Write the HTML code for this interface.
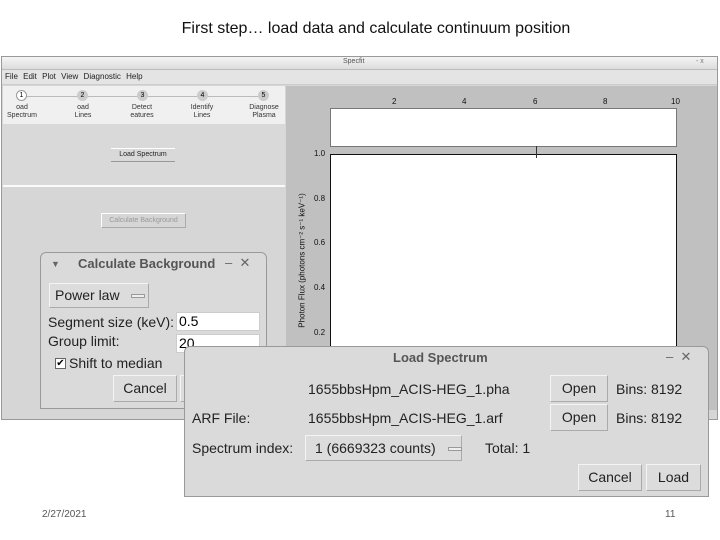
<!DOCTYPE html>
<html><head><meta charset="utf-8"><style>
*{margin:0;padding:0;box-sizing:border-box}
body{width:720px;height:540px;background:#fff;position:relative;overflow:hidden;font-family:"Liberation Sans",sans-serif;}
.a{position:absolute;white-space:nowrap}
.btn{position:absolute;background:#dcdcdc;border:1px solid #aaa;border-top-color:#f4f4f4;border-left-color:#f4f4f4;font-size:14px;color:#222;text-align:center;white-space:nowrap}
.t{position:absolute;font-size:14px;color:#222;white-space:nowrap}
.s{position:absolute;font-size:7px;color:#333;text-align:center;line-height:8px;white-space:nowrap}
.n{position:absolute;font-size:8px;color:#111;font-family:"Liberation Sans",sans-serif}
</style></head><body>
<div class="a" style="left:0;top:20px;width:752px;text-align:center;font-family:'Liberation Sans',sans-serif;font-size:16px;color:#111">First step… load data and calculate continuum position</div>

<!-- main window -->
<div class="a" style="left:1px;top:56px;width:717px;height:364px;background:#d6d6d6;border:1px solid #999"></div>
<div class="a" style="left:2px;top:57px;width:715px;height:13px;background:linear-gradient(#f4f4f4,#dcdcdc);border-bottom:1px solid #bbb"></div>
<div class="a" style="left:343px;top:58px;font-size:7px;color:#555">Specfit</div>
<div class="a" style="left:696px;top:58px;font-size:7px;color:#777">- x</div>
<div class="a" style="left:2px;top:70px;width:715px;height:15px;background:#e4e4e4;border-bottom:1px solid #ccc"></div>
<div class="a" style="left:5px;top:72px;font-size:8px;color:#222;word-spacing:3px">File Edit Plot View Diagnostic Help</div>
<!-- steps -->
<div class="a" style="left:3px;top:86px;width:282px;height:38px;background:#f0f0f0"></div>
<div class="a" style="left:22px;top:96px;width:242px;height:1px;background:#bbb"></div>
<div class="a" style="left:16px;top:90px;width:11px;height:11px;border-radius:50%;background:#fff;border:1px solid #999;font-size:7px;text-align:center;line-height:9px">1</div>
<div class="a" style="left:77px;top:90px;width:11px;height:11px;border-radius:50%;background:#ccc;font-size:7px;text-align:center;line-height:11px">2</div>
<div class="a" style="left:137px;top:90px;width:11px;height:11px;border-radius:50%;background:#ccc;font-size:7px;text-align:center;line-height:11px">3</div>
<div class="a" style="left:197px;top:90px;width:11px;height:11px;border-radius:50%;background:#ccc;font-size:7px;text-align:center;line-height:11px">4</div>
<div class="a" style="left:258px;top:90px;width:11px;height:11px;border-radius:50%;background:#ccc;font-size:7px;text-align:center;line-height:11px">5</div>
<div class="s" style="left:2px;top:104px;width:40px">oad<br>Spectrum</div>
<div class="s" style="left:63px;top:104px;width:40px">oad<br>Lines</div>
<div class="s" style="left:122px;top:104px;width:40px">Detect<br>eatures</div>
<div class="s" style="left:182px;top:104px;width:40px">Identify<br>Lines</div>
<div class="s" style="left:244px;top:104px;width:40px">Diagnose<br>Plasma</div>
<div class="a" style="left:3px;top:124px;width:282px;height:63px;background:#d9d9d9;border-bottom:2px solid #fafafa"></div>
<div class="a" style="left:111px;top:148px;width:64px;height:14px;border-top:1px solid #fff;border-bottom:1px solid #999;font-size:7px;text-align:center;line-height:12px;color:#222">Load Spectrum</div>
<div class="a" style="left:3px;top:189px;width:282px;height:221px;background:#d6d6d6"></div>
<div class="a" style="left:101px;top:213px;width:85px;height:15px;border:1px solid #aaa;border-top-color:#fff;border-left-color:#fff;font-size:7px;text-align:center;line-height:13px;color:#999">Calculate Background</div>
<!-- plot -->
<div class="a" style="left:286px;top:86px;width:431px;height:324px;background:#c0c0c0"></div>
<div class="n" style="left:392px;top:97px">2</div><div class="n" style="left:462px;top:97px">4</div><div class="n" style="left:533px;top:97px">6</div><div class="n" style="left:603px;top:97px">8</div><div class="n" style="left:671px;top:97px">10</div>
<div class="a" style="left:330px;top:108px;width:347px;height:39px;background:#fff;border:1px solid #777"></div>
<div class="a" style="left:330px;top:154px;width:347px;height:200px;background:#fff;border:1px solid #111"></div>
<div class="a" style="left:536px;top:146px;width:1px;height:12px;background:#333"></div>
<div class="n" style="left:314px;top:149px">1.0</div><div class="n" style="left:314px;top:194px">0.8</div><div class="n" style="left:314px;top:238px">0.6</div><div class="n" style="left:314px;top:283px">0.4</div><div class="n" style="left:314px;top:328px">0.2</div>
<div class="a" style="left:212px;top:256px;width:180px;transform:rotate(-90deg);font-size:8px;color:#111;text-align:center">Photon Flux (photons cm⁻² s⁻¹ keV⁻¹)</div>

<!-- calc background dialog -->
<div class="a" style="left:40px;top:252px;width:227px;height:157px;background:#dadada;border:1px solid #999;border-radius:6px 6px 0 0"></div>
<div class="a" style="left:51px;top:259px;font-size:9px;color:#666">▼</div>
<div class="a" style="left:78px;top:256px;font-size:13px;font-weight:bold;color:#555">Calculate Background</div>
<div class="a" style="left:225px;top:255px;font-size:13px;color:#666">–&nbsp;&nbsp;✕</div>
<div class="btn" style="left:49px;top:283px;width:100px;height:25px;line-height:23px;text-align:left;padding-left:5px">Power law <span style="display:inline-block;width:14px;height:4px;background:#eee;border:1px solid #999;vertical-align:middle;margin-left:8px"></span></div>
<div class="t" style="left:48px;top:314px">Segment size (keV):</div>
<div class="a" style="left:176px;top:312px;width:84px;height:19px;background:#fff;border:1px solid #ccc;font-size:14px;padding-left:2px;line-height:17px">0.5</div>
<div class="t" style="left:48px;top:333px">Group limit:</div>
<div class="a" style="left:176px;top:334px;width:84px;height:19px;background:#fff;border:1px solid #ccc;font-size:14px;padding-left:2px;line-height:17px">20</div>
<div class="a" style="left:55px;top:358px;width:11px;height:11px;background:#fff;border:1px solid #666;font-size:10px;line-height:9px;text-align:center">✔</div>
<div class="t" style="left:69px;top:355px">Shift to median</div>
<div class="btn" style="left:113px;top:375px;width:64px;height:27px;line-height:25px">Cancel</div>
<div class="btn" style="left:180px;top:375px;width:80px;height:27px;line-height:25px">Calculate</div>
<div class="t" style="left:264px;top:380px">:</div>

<!-- load spectrum dialog -->
<div class="a" style="left:184px;top:346px;width:525px;height:151px;background:#dadada;border:1px solid #999;border-radius:6px 6px 0 0"></div>
<div class="a" style="left:393px;top:350px;font-size:13px;font-weight:bold;color:#555">Load Spectrum</div>
<div class="a" style="left:666px;top:349px;font-size:13px;color:#666">–&nbsp;&nbsp;✕</div>
<div class="t" style="left:308px;top:381px">1655bbsHpm_ACIS-HEG_1.pha</div>
<div class="btn" style="left:550px;top:375px;width:58px;height:27px;line-height:25px">Open</div>
<div class="t" style="left:616px;top:381px">Bins: 8192</div>
<div class="t" style="left:192px;top:410px">ARF File:</div>
<div class="t" style="left:308px;top:410px">1655bbsHpm_ACIS-HEG_1.arf</div>
<div class="btn" style="left:550px;top:404px;width:58px;height:27px;line-height:25px">Open</div>
<div class="t" style="left:616px;top:410px">Bins: 8192</div>
<div class="t" style="left:192px;top:440px">Spectrum index:</div>
<div class="btn" style="left:305px;top:435px;width:157px;height:26px;line-height:24px;text-align:left;padding-left:9px">1 (6669323 counts) <span style="display:inline-block;width:14px;height:4px;background:#eee;border:1px solid #999;vertical-align:middle;margin-left:8px"></span></div>
<div class="t" style="left:485px;top:440px">Total: 1</div>
<div class="btn" style="left:578px;top:464px;width:64px;height:27px;line-height:25px">Cancel</div>
<div class="btn" style="left:646px;top:464px;width:55px;height:27px;line-height:25px">Load</div>

<div class="a" style="left:42px;top:509px;font-size:10px;color:#555">2/27/2021</div>
<div class="a" style="left:665px;top:509px;font-size:10px;color:#555">11</div>
</body></html>
